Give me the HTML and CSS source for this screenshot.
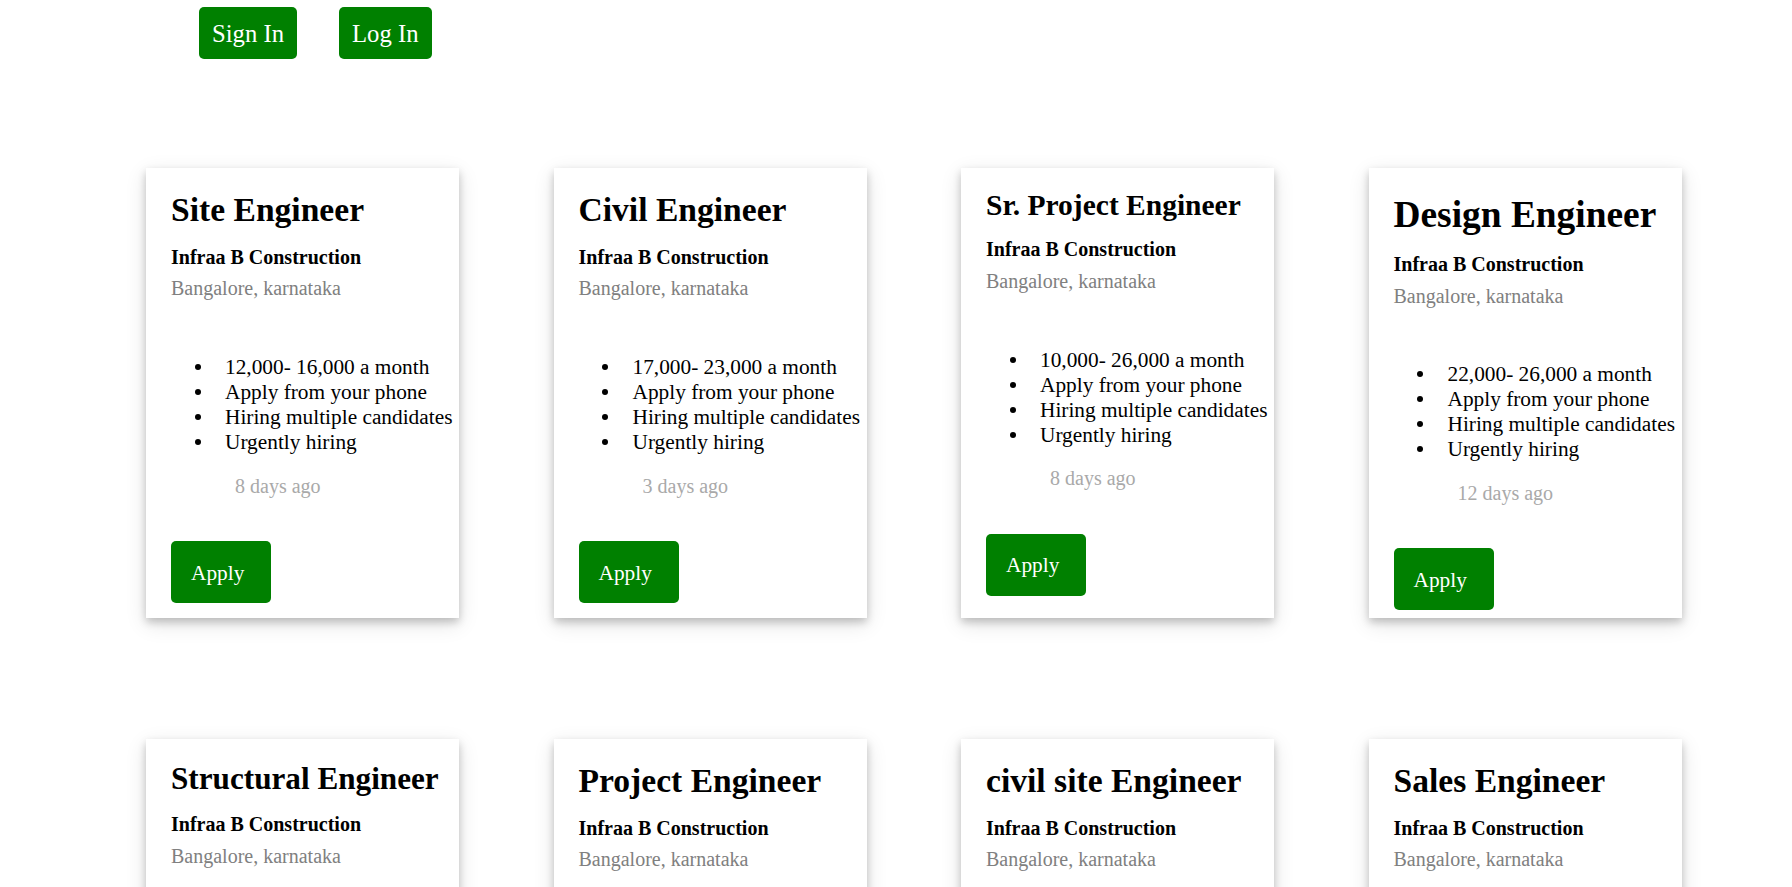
FILE: index.html
```html
<!DOCTYPE html>
<html lang="en">
<head>
<meta charset="utf-8">
<title>Jobs</title>
<link rel="stylesheet" href="styles.css">
</head>
<body>
<header class="topbar">
  <button class="btn">Sign In</button>
  <button class="btn">Log In</button>
</header>
<main class="cards">
  <div class="card">
    <h2 class="title">Site Engineer</h2>
    <h4 class="company">Infraa B Construction</h4>
    <p class="location">Bangalore, karnataka</p>
    <ul class="perks">
      <li>12,000- 16,000 a month</li>
      <li>Apply from your phone</li>
      <li>Hiring multiple candidates</li>
      <li>Urgently hiring</li>
    </ul>
    <p class="posted">8 days ago</p>
    <button class="apply">Apply</button>
  </div>
  <div class="card">
    <h2 class="title">Civil Engineer</h2>
    <h4 class="company">Infraa B Construction</h4>
    <p class="location">Bangalore, karnataka</p>
    <ul class="perks">
      <li>17,000- 23,000 a month</li>
      <li>Apply from your phone</li>
      <li>Hiring multiple candidates</li>
      <li>Urgently hiring</li>
    </ul>
    <p class="posted">3 days ago</p>
    <button class="apply">Apply</button>
  </div>
  <div class="card">
    <h2 class="title title--sm">Sr. Project Engineer</h2>
    <h4 class="company">Infraa B Construction</h4>
    <p class="location">Bangalore, karnataka</p>
    <ul class="perks">
      <li>10,000- 26,000 a month</li>
      <li>Apply from your phone</li>
      <li>Hiring multiple candidates</li>
      <li>Urgently hiring</li>
    </ul>
    <p class="posted">8 days ago</p>
    <button class="apply">Apply</button>
  </div>
  <div class="card">
    <h2 class="title title--lg">Design Engineer</h2>
    <h4 class="company">Infraa B Construction</h4>
    <p class="location">Bangalore, karnataka</p>
    <ul class="perks">
      <li>22,000- 26,000 a month</li>
      <li>Apply from your phone</li>
      <li>Hiring multiple candidates</li>
      <li>Urgently hiring</li>
    </ul>
    <p class="posted">12 days ago</p>
    <button class="apply">Apply</button>
  </div>
  <div class="card">
    <h2 class="title title--md">Structural Engineer</h2>
    <h4 class="company">Infraa B Construction</h4>
    <p class="location">Bangalore, karnataka</p>
    <ul class="perks">
      <li>15,000- 25,000 a month</li>
      <li>Apply from your phone</li>
      <li>Hiring multiple candidates</li>
      <li>Urgently hiring</li>
    </ul>
    <p class="posted">5 days ago</p>
    <button class="apply">Apply</button>
  </div>
  <div class="card">
    <h2 class="title">Project Engineer</h2>
    <h4 class="company">Infraa B Construction</h4>
    <p class="location">Bangalore, karnataka</p>
    <ul class="perks">
      <li>18,000- 24,000 a month</li>
      <li>Apply from your phone</li>
      <li>Hiring multiple candidates</li>
      <li>Urgently hiring</li>
    </ul>
    <p class="posted">6 days ago</p>
    <button class="apply">Apply</button>
  </div>
  <div class="card">
    <h2 class="title">civil site Engineer</h2>
    <h4 class="company">Infraa B Construction</h4>
    <p class="location">Bangalore, karnataka</p>
    <ul class="perks">
      <li>12,000- 18,000 a month</li>
      <li>Apply from your phone</li>
      <li>Hiring multiple candidates</li>
      <li>Urgently hiring</li>
    </ul>
    <p class="posted">2 days ago</p>
    <button class="apply">Apply</button>
  </div>
  <div class="card">
    <h2 class="title">Sales Engineer</h2>
    <h4 class="company">Infraa B Construction</h4>
    <p class="location">Bangalore, karnataka</p>
    <ul class="perks">
      <li>14,000- 20,000 a month</li>
      <li>Apply from your phone</li>
      <li>Hiring multiple candidates</li>
      <li>Urgently hiring</li>
    </ul>
    <p class="posted">10 days ago</p>
    <button class="apply">Apply</button>
  </div>
</main>
</body>
</html>
```
FILE: styles.css
```css
html, body {
  margin: 0;
  padding: 0;
  background: #ffffff;
  color: #000000;
  font-family: "Liberation Serif", "Times New Roman", serif;
}

.topbar {
  display: flex;
  gap: 42px;
  padding: 7px 0 0 199px;
}

.btn {
  height: 52px;
  padding: 2px 13px 0;
  border: none;
  border-radius: 5px;
  background: #008000;
  color: #ffffff;
  font-family: "Liberation Serif", "Times New Roman", serif;
  font-size: 24.7px;
  line-height: normal;
  cursor: pointer;
}

.cards {
  display: grid;
  grid-template-columns: repeat(4, 313px);
  column-gap: 94.5px;
  row-gap: 121px;
  padding: 109px 0 40px 146px;
}

.card {
  box-sizing: border-box;
  height: 450px;
  padding: 4px 0 0 25px;
  background: #ffffff;
  box-shadow: 0 4px 8px 0 rgba(0, 0, 0, 0.2), 0 6px 20px 0 rgba(0, 0, 0, 0.12);
}

.title {
  margin: 0.57em 0 0;
  font-size: 33.6px;
  font-weight: bold;
  line-height: normal;
  white-space: nowrap;
}

.title--sm { font-size: 29.5px; margin-bottom: 3.5px; }
.title--md { font-size: 31.2px; }
.title--lg { font-size: 37.4px; }

.company {
  margin: 16.5px 0 0;
  font-size: 20px;
  font-weight: bold;
  line-height: normal;
}

.location {
  margin: 8.8px 0 0;
  font-size: 20px;
  line-height: normal;
  color: #808080;
}

.perks {
  margin: 54.7px 0 0;
  padding-left: 54px;
  list-style: none;
  font-size: 21.33px;
  line-height: normal;
}

.perks li {
  position: relative;
  white-space: nowrap;
}

.perks li::before {
  content: "";
  position: absolute;
  left: -30.5px;
  top: 9.2px;
  width: 6px;
  height: 6px;
  border-radius: 50%;
  background: #000000;
}

.posted {
  margin: 19.5px 0 0 64px;
  font-size: 20px;
  line-height: normal;
  color: #a9a9a9;
}

.apply {
  display: block;
  margin-top: 43.5px;
  width: 100px;
  height: 62px;
  padding: 2px 0 0 20px;
  border: none;
  border-radius: 5px;
  background: #008000;
  color: #ffffff;
  text-align: left;
  font-family: "Liberation Serif", "Times New Roman", serif;
  font-size: 21.33px;
  cursor: pointer;
}
```
